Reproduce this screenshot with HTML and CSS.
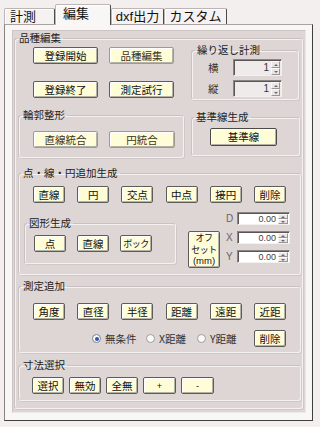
FILE: index.html
```html
<!DOCTYPE html>
<html lang="ja">
<head>
<meta charset="utf-8">
<title>編集</title>
<link rel="stylesheet" href="styles.css">
</head>
<body>
<div class="tabs">
  <div class="tab t1">計測</div>
  <div class="tab t2 active">編集</div>
  <div class="tab t3">dxf出力</div>
  <div class="tab t4">カスタム</div>
</div>
<div class="frame">
  <div class="panel">
    <fieldset class="grp main">
      <legend>品種編集</legend>
      <div class="secA">
        <div class="regbtns">
          <button type="button" class="btn big">登録開始</button>
          <button type="button" class="btn big soft">品種編集</button>
          <button type="button" class="btn big">登録終了</button>
          <button type="button" class="btn big">測定試行</button>
        </div>
        <fieldset class="grp repeat">
          <legend>繰り返し計測</legend>
          <div class="rrow">
            <span class="rlbl">横</span>
            <div class="spin dis"><span class="val">1</span><span class="arrows"><i class="up"></i><i class="dn"></i></span></div>
          </div>
          <div class="rrow">
            <span class="rlbl">縦</span>
            <div class="spin dis"><span class="val">1</span><span class="arrows"><i class="up"></i><i class="dn"></i></span></div>
          </div>
        </fieldset>
      </div>
      <div class="secB">
        <fieldset class="grp rinkaku">
          <legend>輪郭整形</legend>
          <div class="bpair">
            <button type="button" class="btn big soft">直線統合</button>
            <button type="button" class="btn big soft w66">円統合</button>
          </div>
        </fieldset>
        <fieldset class="grp kijun">
          <legend>基準線生成</legend>
          <button type="button" class="btn kbtn">基準線</button>
        </fieldset>
      </div>
      <fieldset class="grp tensen">
        <legend>点・線・円追加生成</legend>
        <div class="row6">
          <button type="button" class="btn s">直線</button>
          <button type="button" class="btn s">円</button>
          <button type="button" class="btn s">交点</button>
          <button type="button" class="btn s">中点</button>
          <button type="button" class="btn s">接円</button>
          <button type="button" class="btn s">削除</button>
        </div>
        <div class="secC2">
          <fieldset class="grp zukei">
            <legend>図形生成</legend>
            <div class="row3">
              <button type="button" class="btn s">点</button>
              <button type="button" class="btn s">直線</button>
              <button type="button" class="btn s narrow">ボック</button>
            </div>
          </fieldset>
          <div class="offcol">
            <button type="button" class="btn offset"><span class="ol">オフ</span><span class="ol">セット</span><span class="ol">(mm)</span></button>
            <div class="fields">
              <div class="frow"><span class="flbl">D</span><div class="spin"><span class="val">0.00</span><span class="arrows"><i class="up"></i><i class="dn"></i></span></div></div>
              <div class="frow"><span class="flbl">X</span><div class="spin"><span class="val">0.00</span><span class="arrows"><i class="up"></i><i class="dn"></i></span></div></div>
              <div class="frow"><span class="flbl">Y</span><div class="spin"><span class="val">0.00</span><span class="arrows"><i class="up"></i><i class="dn"></i></span></div></div>
            </div>
          </div>
        </div>
      </fieldset>
      <fieldset class="grp sokutei">
        <legend>測定追加</legend>
        <div class="row6">
          <button type="button" class="btn s">角度</button>
          <button type="button" class="btn s">直径</button>
          <button type="button" class="btn s">半径</button>
          <button type="button" class="btn s">距離</button>
          <button type="button" class="btn s">遠距</button>
          <button type="button" class="btn s">近距</button>
        </div>
        <div class="radrow">
          <span class="ritem i1"><span class="radio on"></span>無条件</span>
          <span class="ritem i2"><span class="radio"></span>X距離</span>
          <span class="ritem i3"><span class="radio"></span>Y距離</span>
          <button type="button" class="btn s">削除</button>
        </div>
      </fieldset>
      <fieldset class="grp sunpo">
        <legend>寸法選択</legend>
        <div class="row5">
          <button type="button" class="btn s">選択</button>
          <button type="button" class="btn s">無効</button>
          <button type="button" class="btn s">全無</button>
          <button type="button" class="btn s w33 sym">+</button>
          <button type="button" class="btn s w33 sym">-</button>
        </div>
      </fieldset>
    </fieldset>
  </div>
</div>
</body>
</html>
```

FILE: styles.css
```css
* { box-sizing: border-box; }
html, body { margin: 0; padding: 0; }
body {
  width: 320px;
  height: 427px;
  overflow: hidden;
  background: #f3efef;
  font-family: "Liberation Sans", "Noto Sans CJK JP", sans-serif;
  font-size: 10.5px;
  color: #222;
}

/* tabs */
.tabs {
  display: flex;
  align-items: flex-end;
  height: 24px;
  padding-left: 4px;
}
.tab {
  height: 16px;
  border: 1px solid;
  border-bottom: none;
  border-color: #bdb5b5 #4a4a4a transparent #bdb5b5;
  border-radius: 2px 2px 0 0;
  background: #f6f2f2;
  box-shadow: inset 1px 1px 0 #fff;
  font-size: 13px;
  line-height: 15px;
  text-align: center;
  white-space: nowrap;
  color: #111;
}
.t1 { width: 51px; text-align: left; padding-left: 5px; }
.t2 { width: 56px; text-align: left; padding-left: 7px; }
.t3 { width: 53px; }
.t4 { width: 63px; }
.tab.active {
  height: 21px;
  margin-bottom: -1px;
  line-height: 18px;
  position: relative;
  z-index: 2;
  background: #f9f6f6;
}

/* frame */
.frame {
  margin-left: 4px;
  width: 309px;
  height: 397px;
  border: 1px solid;
  border-color: #aaa2a2 #404040 #404040 #8a8282;
  background: #f9f6f6;
  padding: 5px 0 0 7px;
}
.panel {
  width: 294px;
  height: 383px;
  background: #ddd6d5;
  border: 1px solid;
  border-color: #cdc5c5 #eee9e9 #eee9e9 #cdc5c5;
}

/* group boxes */
.grp {
  margin: 0;
  padding: 0;
  min-width: 0;
  border: 1px solid;
  border-color: #c9c1c1 #f5f1f1 #f5f1f1 #c9c1c1;
  box-shadow: inset 1px 1px 0 #f5f1f1, 1px 1px 0 #cfc8c8;
  border-radius: 3px;
}
.grp > legend {
  padding: 0 2px;
  margin-left: 2px;
  font-size: 10.5px;
  line-height: 12px;
  color: #222;
  font-family: "Noto Sans CJK JP", sans-serif;
}
.main {
  margin: 1px 0 0 1px;
  width: 289px;
  height: 377px;
}

/* buttons */
.btn {
  display: block;
  margin: 0;
  padding: 0;
  height: 17px;
  width: 32px;
  border: 1px solid #5c5c5c;
  border-radius: 2px;
  background: #fffcd8;
  box-shadow: inset 1px 1px 0 #ffffff, inset -1px -1px 0 #b4b2a4;
  font-family: "Noto Sans CJK JP", sans-serif;
  font-size: 10.5px;
  line-height: 14px;
  color: #111;
  text-align: center;
  white-space: nowrap;
}
.btn.big { width: 65px; }
.btn.w66 { width: 66px; }
.btn.w33 { width: 33px; }
.btn.soft { border-color: #9e9a92; color: #3c3220; }
.btn.sym { font-family: "Liberation Sans", sans-serif; font-size: 9px; }
.btn.narrow { font-size: 9px; letter-spacing: -0.5px; }

/* section A */
.secA { display: flex; height: 65px; }
.regbtns {
  margin: 3px 0 0 18px;
  display: grid;
  grid-template-columns: 65px 65px;
  grid-auto-rows: 17px;
  column-gap: 11px;
  row-gap: 17px;
  align-content: start;
}
.repeat {
  margin-left: 17px;
  width: 108px;
  height: 56px;
}
.repeat > legend { margin-left: 3px; }
.rrow {
  display: flex;
  align-items: center;
  height: 17px;
  margin-left: 16px;
  margin-top: 3px;
}
.rrow + .rrow { margin-top: 4px; }
.rlbl { width: 25px; color: #333; font-family: "Noto Sans CJK JP", sans-serif; }

.spin {
  display: flex;
  height: 100%;
  width: 49px;
  border: 1px solid;
  border-color: #8a8686 #f4f0f0 #f4f0f0 #8a8686;
  box-shadow: inset 1px 1px 0 #5a5656;
  background: #fff;
}
.spin.dis { background: #efebeb; }
.val {
  flex: 1;
  text-align: right;
  padding: 1px 2px 0 0;
  font-family: "Liberation Sans", sans-serif;
  font-size: 9px;
  line-height: 11px;
  color: #444;
}
.rrow .val { font-size: 10px; line-height: 13px; color: #333; }
.arrows {
  width: 10px;
  display: flex;
  flex-direction: column;
  padding: 1px 1px 0 0;
}
.arrows i {
  flex: 1;
  display: flex;
  align-items: center;
  justify-content: center;
  border: 1px solid;
  border-color: #fbf9f9 #9a9494 #9a9494 #fbf9f9;
  background: #ebe6e6;
}
.arrows i::before {
  content: "";
  border-left: 2px solid transparent;
  border-right: 2px solid transparent;
}
.arrows .up::before { border-bottom: 2px solid #6a6a6a; }
.arrows .dn::before { border-top: 2px solid #6a6a6a; }

/* section B */
.secB { display: flex; align-items: flex-start; }
.rinkaku {
  margin-left: 3px;
  width: 166px;
  height: 49px;
}
.bpair {
  display: flex;
  gap: 11px;
  margin: 10px 0 0 14px;
}
.kijun {
  margin: 2px 0 0 7px;
  width: 109px;
  height: 45px;
}
.kbtn { width: 67px; height: 18px; margin: 5px 0 0 18px; border-color: #4a4a4a; }

/* section C */
.tensen {
  margin: 9px 0 0 3px;
  width: 283px;
  height: 108px;
}
.row6 {
  display: flex;
  justify-content: space-between;
  width: 253px;
  margin: 7px 0 0 14px;
}
.secC2 { display: flex; align-items: flex-start; }
.zukei {
  margin: 14px 0 0 5px;
  width: 152px;
  height: 47px;
}
.row3 { display: flex; gap: 11px; margin: 6px 0 0 9px; }
.offcol {
  display: flex;
  align-items: flex-start;
  margin: 9px 0 0 12px;
}
.btn.offset {
  width: 32px;
  height: 37px;
  margin-top: 19px;
  padding: 0;
  display: flex;
  flex-direction: column;
  align-items: center;
  justify-content: center;
}
.ol {
  display: block;
  font-size: 9px;
  line-height: 11.5px;
  letter-spacing: -0.5px;
}
.ol:last-child { font-family: "Liberation Sans", sans-serif; font-size: 9.5px; letter-spacing: 0; }
.fields {
  display: flex;
  flex-direction: column;
  gap: 6px;
  margin-left: 6px;
}
.frow { display: flex; align-items: center; height: 13px; }
.flbl {
  width: 11px;
  font-family: "Liberation Sans", sans-serif;
  font-size: 10px;
  color: #666;
}
.frow .spin { width: 53px; }
.frow .arrows { width: 11px; }

/* section D */
.sokutei {
  margin: 5px 0 0 3px;
  width: 283px;
  height: 73px;
}
.sokutei .row6 { margin-top: 11px; }
.radrow {
  display: flex;
  align-items: center;
  margin: 10px 0 0 73px;
}
.ritem {
  display: flex;
  align-items: center;
  font-family: "Noto Sans CJK JP", sans-serif;
  font-size: 10.5px;
  color: #333;
  white-space: nowrap;
}
.i1 { width: 54px; }
.i2 { width: 51px; }
.i3 { width: 57px; }
.radio {
  width: 9px;
  height: 9px;
  margin-right: 4px;
  border-radius: 50%;
  border: 1px solid #a09c9c;
  background: #fafafa;
  display: flex;
  align-items: center;
  justify-content: center;
}
.radio.on { border-color: #7a8090; }
.radio.on::before {
  content: "";
  width: 4px;
  height: 4px;
  border-radius: 50%;
  background: #2f56a8;
}

/* section E */
.sunpo {
  margin: 6px 0 0 3px;
  width: 283px;
  height: 42px;
}
.row5 { display: flex; gap: 5px; margin: 6px 0 0 13px; }
```
